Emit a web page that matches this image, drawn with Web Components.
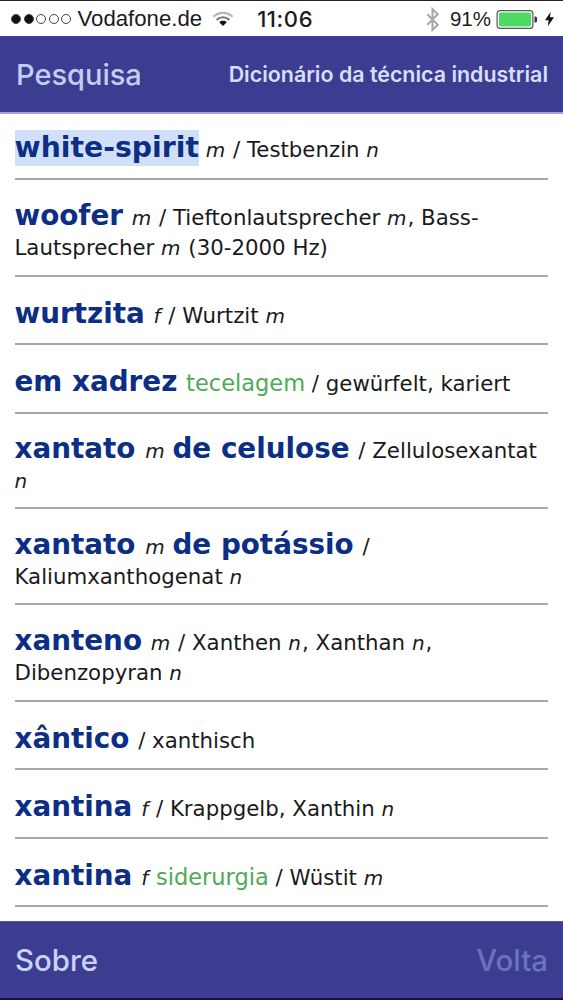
<!DOCTYPE html>
<html><head><meta charset="utf-8"><style>
html,body{margin:0;padding:0;background:#fff}
body{width:563px;height:1000px;overflow:hidden;font-family:"DejaVu Sans",sans-serif;display:flex;flex-direction:column}
</style></head><body>
<status-bar></status-bar>
<nav-bar></nav-bar>
<dict-list>
<dict-row h="66" pt="4"><b-w hl>white-spirit</b-w> <i>m</i> / Testbenzin <i>n</i></dict-row>
<dict-row h="97"><b-w>woofer</b-w> <i>m</i> / Tieftonlautsprecher <i>m</i>, Bass-<br>Lautsprecher <i>m</i> (30-2000 Hz)</dict-row>
<dict-row h="68"><b-w>wurtzita</b-w> <i>f</i> / Wurtzit <i>m</i></dict-row>
<dict-row h="69"><b-w>em xadrez</b-w> <g-w>tecelagem</g-w> / gewürfelt, kariert</dict-row>
<dict-row h="95"><b-w wide>xantato</b-w> <i>m</i> <b-w>de celulose</b-w> / Zellulosexantat<br><i>n</i></dict-row>
<dict-row h="96"><b-w wide>xantato</b-w> <i>m</i> <b-w>de potássio</b-w> /<br>Kaliumxanthogenat <i>n</i></dict-row>
<dict-row h="97"><b-w>xanteno</b-w> <i>m</i> / Xanthen <i>n</i>, Xanthan <i>n</i>,<br>Dibenzopyran <i>n</i></dict-row>
<dict-row h="68"><b-w>xântico</b-w> / xanthisch</dict-row>
<dict-row h="69"><b-w>xantina</b-w> <i>f</i> / Krappgelb, Xanthin <i>n</i></dict-row>
<dict-row h="68"><b-w>xantina</b-w> <i>f</i> <g-w>siderurgia</g-w> / Wüstit <i>m</i></dict-row>
</dict-list>
<tab-bar></tab-bar>
<script>
function def(name,html,init){customElements.define(name,class extends HTMLElement{constructor(){super();this.attachShadow({mode:'open'}).innerHTML=html;}connectedCallback(){if(init)init(this);}});}
const ui='Inter,Roboto,sans-serif';
def('status-bar',`<style>
:host{display:flex;align-items:center;box-sizing:border-box;height:36px;border-top:1.5px solid #222;background:#fff;color:#1c1c1c;font:21px ${ui};padding:1px 9px 0 11px;flex:none;position:relative}
.d{display:flex;gap:2.500px;align-items:center}
.d span{width:10px;height:10px;border-radius:50%;border:1px solid #444;box-sizing:border-box}
.d span.f{background:#111}
.c{margin-left:6.500px;font-family:"Liberation Sans",sans-serif;font-size:22.200px}
.t{margin-left:23px;font-weight:500;font-size:22px;letter-spacing:.6px}
.sp{flex:1}
.p{font-family:"Liberation Sans",sans-serif;font-size:20.500px;margin-left:10px}
svg{display:block}
</style>
<div class="d"><span class="f"></span><span class="f"></span><span></span><span></span><span></span></div>
<span class="c">Vodafone.de</span>
<svg style="margin-left:10px" width="22" height="16" viewBox="0 0 20 15"><path d="M1 5.500C6 .5 14 .5 19 5.500" fill="none" stroke="#b5b5b5" stroke-width="2"/><path d="M4 8.300C7.500 5 12.500 5 16 8.300" fill="none" stroke="#777" stroke-width="2"/><path d="M10 14L6.500 10.500C8.500 8.800 11.500 8.800 13.500 10.500Z" fill="#111"/></svg>
<span class="t">11:06</span><span class="sp"></span>
<svg width="15" height="25" viewBox="0 0 14 24"><path d="M2 7L12 17L7 22V2L12 7L2 17" fill="none" stroke="#a9a9a9" stroke-width="2"/></svg>
<span class="p">91%</span>
<svg style="margin-left:5px" width="42" height="19" viewBox="0 0 41 19"><rect x=".6" y=".6" width="35.800" height="17.800" rx="3" fill="#fff" stroke="#555" stroke-width="1.200"/><rect x="2.500" y="2.500" width="32" height="14" rx="1.500" fill="#4cd964"/><path d="M38 6.500h1a1.500 1.500 0 0 1 1.500 1.500v3a1.500 1.500 0 0 1-1.500 1.500h-1z" fill="#333"/></svg>
<svg style="margin-left:7px" width="9" height="16" viewBox="0 0 11 18"><path d="M7 0L0 10.500H4.500L3.500 18L11 7H6Z" fill="#111"/></svg>`);
def('nav-bar',`<style>
:host{display:flex;justify-content:space-between;align-items:center;box-sizing:border-box;height:78px;background:#3c3d91;border-bottom:2px solid #9ea3d6;padding:0 15px 0 16px;color:#cfd8f7;font-family:${ui};flex:none}
.a{font-size:29px;font-weight:500;color:#c3cef5}
.b{font-size:21.400px;font-weight:600;color:#d8def8}
</style><span class="a">Pesquisa</span><span class="b">Dicionário da técnica industrial</span>`);
def('dict-list',`<style>:host{display:block;flex:1;min-height:0;padding:0 15px 0 14.500px;background:#fff}</style><slot></slot>`);
def('dict-row',`<style>
:host{display:flex;align-items:center;box-sizing:border-box;border-bottom:2px solid #a8a8a8;color:#1a1a1c;font-size:21.300px;line-height:30px;padding-top:9px}
::slotted(i){font-size:20px;margin-right:1px}
</style><div><slot></slot></div>`,el=>{el.style.height=el.getAttribute('h')+'px';if(el.hasAttribute('pt'))el.style.paddingTop=el.getAttribute('pt')+'px';});
def('b-w',`<style>
:host{font-size:27.800px;font-weight:700;color:#0c2e84;margin-right:2px}
:host([wide]){margin-right:3px}
:host([hl]){background:#cfe0f8;display:inline-block;line-height:36px;font-size:28.300px;margin:0}
</style><slot></slot>`);
def('g-w',`<style>:host{color:#4dab54;font-size:22.500px}</style><slot></slot>`);
def('tab-bar',`<style>
:host{display:flex;justify-content:space-between;align-items:center;box-sizing:border-box;height:79px;background:#3c3d91;border-top:1px solid #5557a8;border-bottom:2px solid #14163f;padding:0 15px;font:500 29.400px ${ui};flex:none}
.a{color:#c9d3f5}.b{color:#6d73b8}
</style><span class="a">Sobre</span><span class="b">Volta</span>`);
</script>
</body></html>
